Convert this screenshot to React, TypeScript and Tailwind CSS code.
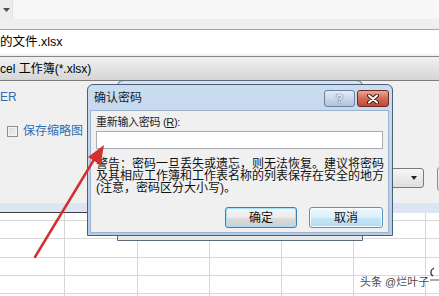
import React from 'react';

const cols = ['w-[65px]', 'w-[73px]', 'w-[72px]', 'w-[72px]', 'w-[72px]', 'w-[72px]', 'w-[40px]'];
const rows = ['h-[8px]', 'h-[18px]', 'h-[19px]', 'h-[18px]', 'h-[18px]', 'h-[18px]'];

function Sheet() {
    return (
        <div className="flex-1 bg-white overflow-hidden">
            {rows.map((h, r) => (
                <div key={r} className={`${h} flex`}>
                    {cols.map((w, c) => (
                        <div key={c} className={`${w} shrink-0 border-r border-b border-[#d7d7d7]`} />
                    ))}
                </div>
            ))}
        </div>
    );
}

function ConfirmDialog() {
    return (
        <div className="absolute left-[87px] top-[84px] w-[306px] h-[152px] rounded-t-[6px] border border-[#4b5f78] bg-gradient-to-b from-[#cadcf0] to-[#b6cde7] flex flex-col pl-[2px] pr-[3px] pb-[2px]">
            {/* title bar */}
            <div className="h-[25px] shrink-0 flex items-start">
                <span className="pl-[4px] pt-[6px] leading-[14px] text-[12px] text-[#1b1b1b]">确认密码</span>
                <div className="ml-auto mt-[5px] flex gap-[2px]">
                    <div className="w-[31px] h-[17px] rounded-[3px] border border-[#6c819b] bg-gradient-to-b from-[#e2ecf7] to-[#afc4dd] flex items-center justify-center">
                        <span className="text-[13px] leading-none font-bold text-[#f4f7fb] [text-shadow:0_0_1px_#2f4258,0_0_1px_#2f4258]">?</span>
                    </div>
                    <div className="w-[32px] h-[17px] rounded-[3px] border border-[#6b2a22] bg-gradient-to-b from-[#e9a898] via-[#d06a58] to-[#c04a38] flex items-center justify-center">
                        <svg width="12" height="10" viewBox="0 0 12 10">
                            <path d="M2 1.5L10 8.5M10 1.5L2 8.5" stroke="#4a1812" strokeWidth="4" strokeLinecap="round" />
                            <path d="M2 1.5L10 8.5M10 1.5L2 8.5" stroke="#ffffff" strokeWidth="2" strokeLinecap="round" />
                        </svg>
                    </div>
                </div>
            </div>
            {/* client area */}
            <div className="flex-1 bg-[#f0f0f0] border border-[#9db3cd] flex flex-col px-[5px]">
                <div className="pt-[4px] leading-[14px] text-[11px] tracking-[-0.3px] text-[#1b1b1b]">
                    重新输入密码 (<span className="underline">R</span>):
                </div>
                <div className="mt-[2px] h-[18px] bg-white border border-[#abadb3]" />
                <div className="mt-[9px] text-[12px] leading-[12px] text-[#111] whitespace-nowrap">
                    <div>警告：密码一旦丢失或遗忘，则无法恢复。建议将密码</div>
                    <div>及其相应工作簿和工作表名称的列表保存在安全的地方</div>
                    <div>(注意，密码区分大小写)。</div>
                </div>
                <div className="mt-[13px] flex justify-end gap-[12px]">
                    <button className="w-[72px] h-[21px] rounded-[3px] border border-[#3c7fb1] bg-[linear-gradient(#f4f4f4_0%,#ececec_50%,#dddddd_50%,#cfcfcf_100%)] shadow-[inset_0_0_0_1px_#a6e0f8] text-[12px] leading-none text-[#111]">
                        确定
                    </button>
                    <button className="w-[74px] h-[21px] rounded-[3px] border border-[#5b93bf] bg-[linear-gradient(#eef8fd_0%,#dcf0fb_50%,#c6e6f8_50%,#b3dcf3_100%)] shadow-[inset_0_0_0_1px_#f6fbfe] text-[12px] leading-none text-[#111]">
                        取消
                    </button>
                </div>
            </div>
        </div>
    );
}

export default function App() {
    return (
        <div className="relative w-[439px] h-[296px] overflow-hidden bg-white text-[12px] text-black font-['Liberation_Sans','Noto_Sans_CJK_SC',sans-serif]">
            <div className="flex flex-col h-full">
                {/* top toolbar */}
                <div className="h-[19px] shrink-0 flex bg-[#f7f7f7]">
                    <div className="w-[13px] bg-[#ededed] border-r border-[#e0e0e0] flex items-center justify-center">
                        <svg width="7" height="4" viewBox="0 0 7 4">
                            <path d="M0 0H7L3.5 4Z" fill="#4d4d4d" />
                        </svg>
                    </div>
                </div>
                <div className="h-[11px] shrink-0 bg-[#efefef] border-b border-[#a4a4a4]" />
                {/* file name */}
                <div className="h-[24px] shrink-0 bg-white flex items-center">
                    <span className="text-[12.5px]">的文件.xlsx</span>
                </div>
                <div className="h-[3px] shrink-0 bg-[#f1f1f1] border-b border-[#858585]" />
                {/* file type */}
                <div className="h-[24px] shrink-0 bg-gradient-to-b from-[#f1f1f1] to-[#d5d5d5] border-b border-[#7c7c7c] flex items-center">
                    <span className="text-[12px]">cel 工作簿(*.xlsx)</span>
                </div>
                {/* options panel */}
                <div className="h-[122px] shrink-0 bg-[#f0f0f0] overflow-hidden">
                    <div className="pt-[9px] leading-[14px] text-[#2f6cb3]">ER</div>
                    <div className="mt-[20px] h-[14px] pl-[7px] flex items-center gap-[5px]">
                        <div className="w-[11px] h-[11px] border border-[#8e8f8f] bg-gradient-to-br from-[#d8d8d8] to-[#f7f7f7] shadow-[inset_0_0_0_1px_#f4f4f4]" />
                        <span className="text-[12px] leading-[14px] text-[#2f6cb3]">保存缩略图</span>
                    </div>
                    <div className="mt-[30px] flex pl-[304px] gap-[13px]">
                        <div className="w-[120px] h-[20px] shrink-0 rounded-[3px] border border-[#7a7a7a] bg-gradient-to-b from-[#f6f6f6] to-[#dedede] flex items-center justify-end pr-[6px]">
                            <svg width="6" height="4" viewBox="0 0 6 4">
                                <path d="M0 0H6L3 4Z" fill="#222" />
                            </svg>
                        </div>
                        <div className="w-[30px] h-[24px] mt-[-1px] shrink-0 rounded-[3px] border border-[#8a8a8a] bg-gradient-to-b from-[#f6f6f6] to-[#e2e2e2]" />
                    </div>
                </div>
                <div className="h-[10px] shrink-0 flex">
                    <div className="w-[392px] bg-[#dce6f2] border-b border-[#3e3e3e]" />
                    <div className="flex-1 bg-[#dce6f2]" />
                </div>
                <Sheet />
            </div>

            {/* general options window behind */}
            <div className="absolute left-[117px] top-[80px] w-[246px] h-[161px] rounded-t-[6px] border border-[#5d6a79] bg-[linear-gradient(#d6e2ef_0px,#d6e2ef_6px,#e8e8e8_6px)]" />

            <ConfirmDialog />

            {/* red arrow */}
            <svg className="absolute left-0 top-0 pointer-events-none" width="439" height="296" viewBox="0 0 439 296">
                <path d="M35 257L95 158" stroke="#d3302f" strokeWidth="2.5" strokeLinecap="round" />
                <path d="M104 145L88 157L100.5 165Z" fill="#d3302f" />
            </svg>

            {/* watermark */}
            <div className="absolute left-[360px] top-[275px] text-[11px] leading-[14px] text-[#4a4a4a] whitespace-nowrap [text-shadow:0_0_2px_#fff,0_0_2px_#fff]">
                头条 @烂叶子
            </div>
            <svg className="absolute left-[428px] top-[266px]" width="11" height="16" viewBox="0 0 11 16">
                <path d="M5 10C2 8 2 4 6 2" stroke="#333" strokeWidth="1.3" fill="none" />
                <path d="M2 14H11" stroke="#555" strokeWidth="1" />
            </svg>
        </div>
    );
}
